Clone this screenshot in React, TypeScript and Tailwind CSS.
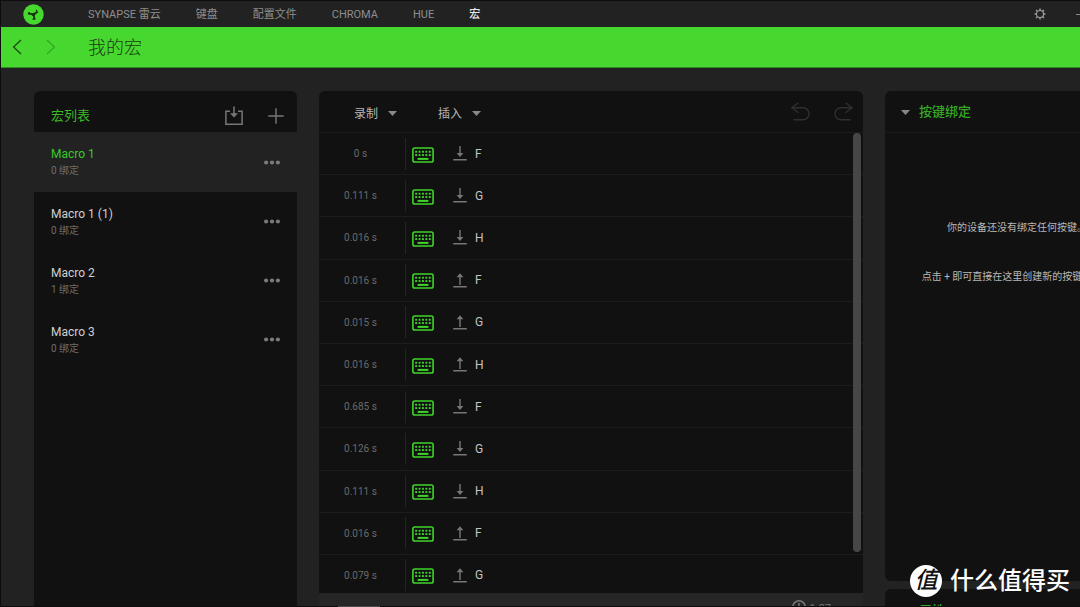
import React from "react";

type Direction = "down" | "up";

const tabs = ["SYNAPSE 雷云", "键盘", "配置文件", "CHROMA", "HUE", "宏"];

const macros = [
  { name: "Macro 1", bindings: 0 },
  { name: "Macro 1 (1)", bindings: 0 },
  { name: "Macro 2", bindings: 1 },
  { name: "Macro 3", bindings: 0 },
];

const events: { time: string; direction: Direction; keyName: string }[] = [
  { time: "0 s", direction: "down", keyName: "F" },
  { time: "0.111 s", direction: "down", keyName: "G" },
  { time: "0.016 s", direction: "down", keyName: "H" },
  { time: "0.016 s", direction: "up", keyName: "F" },
  { time: "0.015 s", direction: "up", keyName: "G" },
  { time: "0.016 s", direction: "up", keyName: "H" },
  { time: "0.685 s", direction: "down", keyName: "F" },
  { time: "0.126 s", direction: "down", keyName: "G" },
  { time: "0.111 s", direction: "down", keyName: "H" },
  { time: "0.016 s", direction: "up", keyName: "F" },
  { time: "0.079 s", direction: "up", keyName: "G" },
];

function Logo() {
  return (
    <svg width="21" height="21" viewBox="0 0 21 21" aria-hidden="true">
      <circle cx="10.5" cy="10.5" r="10.2" fill="#45d92e" />
      <g fill="none" stroke="#14300f" strokeLinecap="round" strokeLinejoin="round">
        <path d="M10.6 10.2 14 8.2M10.2 10.6 5.8 9.4M10.6 11 11.4 14.8" strokeWidth="1.7" />
        <path d="M13.4 6.2 14.2 8.4M5.4 9.8 6.4 8.6M10 15.1 12 14.9" strokeWidth="1.2" />
      </g>
      <circle cx="10.6" cy="10.4" r="1.7" fill="#14300f" />
    </svg>
  );
}

function Chevron({ left = false }: { left?: boolean }) {
  return (
    <svg width="10" height="16" viewBox="0 0 10 16" fill="none" stroke="currentColor" strokeWidth="1.3" aria-hidden="true">
      <path d={left ? "M9 1 1.6 8 9 15" : "M1 1l7.4 7L1 15"} />
    </svg>
  );
}

function Gear() {
  return (
    <svg width="12" height="12" viewBox="0 0 12 12" fill="none" stroke="#a0a0a0" aria-hidden="true">
      <circle cx="6" cy="6" r="3.5" strokeWidth="1.1" />
      <path
        d="M6 .6v1.8M6 9.6v1.8M.6 6h1.8M9.6 6h1.8M2.1 2.1l1.3 1.3M8.6 8.6l1.3 1.3M2.1 9.9l1.3-1.3M8.6 3.4l1.3-1.3"
        strokeWidth="1.4"
      />
    </svg>
  );
}

function ImportIcon() {
  return (
    <svg width="18" height="20" viewBox="0 0 18 20" fill="none" stroke="#777" strokeWidth="1.5" aria-hidden="true">
      <path d="M5 5.2H.9v13h16.2v-13H13" />
      <path d="M9 .5v8" />
      <path d="M5 7.2h8L9 11.6z" fill="#777" stroke="none" />
    </svg>
  );
}

function PlusIcon() {
  return (
    <svg width="16" height="16" viewBox="0 0 16 16" stroke="#777" strokeWidth="1.4" aria-hidden="true">
      <path d="M8 .3v15.4M.3 8h15.4" />
    </svg>
  );
}

function Dots() {
  return (
    <svg width="16" height="5" viewBox="0 0 16 5" fill="#7b7b7b" aria-hidden="true">
      <circle cx="2.1" cy="2.5" r="2.1" />
      <circle cx="8" cy="2.5" r="2.1" />
      <circle cx="13.9" cy="2.5" r="2.1" />
    </svg>
  );
}

function Caret() {
  return (
    <svg width="9" height="5" viewBox="0 0 9 5" fill="#888" aria-hidden="true">
      <path d="M0 0h9L4.5 5z" />
    </svg>
  );
}

function HistoryArrow({ redo = false }: { redo?: boolean }) {
  return (
    <svg width="19" height="19" viewBox="0 0 19 19" fill="none" stroke="#303030" strokeWidth="1.4" aria-hidden="true">
      <path
        d={
          redo
            ? "M18 5.8H7a6 6 0 0 0 0 12h9.5M11.5.8l6.7 5-6.7 5"
            : "M1 5.8h11a6 6 0 0 1 0 12H2.5M7.5.8l-6.7 5 6.7 5"
        }
      />
    </svg>
  );
}

const keyColumns = [3.2, 6.6, 10, 13.4, 16.8];

function KeyboardIcon() {
  return (
    <svg width="22" height="16" viewBox="0 0 22 16" fill="#3ed428" aria-hidden="true">
      <rect x=".9" y="1" width="20.2" height="14" rx="1.8" fill="none" stroke="#3ed428" strokeWidth="1.6" />
      {keyColumns.map((x) => (
        <React.Fragment key={x}>
          <rect x={x} y="3.8" width="1.9" height="1.9" />
          <rect x={x} y="7.1" width="1.9" height="1.9" />
        </React.Fragment>
      ))}
      <rect x="5.6" y="10.9" width="10.8" height="2" />
    </svg>
  );
}

function PressIcon({ direction }: { direction: Direction }) {
  return (
    <svg width="14" height="15" viewBox="0 0 14 15" fill="#777" aria-hidden="true">
      <rect x=".2" y="13" width="13.6" height="1.5" />
      {direction === "down" ? (
        <path d="M6.3 0h1.4v7h2.7L7 11 3.6 7h2.7z" />
      ) : (
        <path d="M6.3 12h1.4V4.2h2.7L7 .2 3.6 4.2h2.7z" />
      )}
    </svg>
  );
}

function TopBar() {
  return (
    <header className="flex h-[26px] shrink-0 items-center bg-[#222222] pl-[22px]">
      <Logo />
      <nav className="mt-px ml-11 flex gap-[35px] text-[11px] leading-4">
        {tabs.map((tab) => (
          <a
            key={tab}
            href="#"
            className={tab === "宏" ? "whitespace-nowrap font-medium text-[#e8e8e8]" : "whitespace-nowrap text-[#8e8e8e]"}
          >
            {tab}
          </a>
        ))}
      </nav>
      <div className="ml-auto flex shrink-0 items-center gap-[30px]">
        <button type="button" aria-label="设置">
          <Gear />
        </button>
        <button type="button" aria-label="最小化" className="h-px w-1 bg-[#888]" />
      </div>
    </header>
  );
}

function TitleBar() {
  return (
    <div className="flex h-[41px] shrink-0 items-center border-b border-[#2f8d22] bg-[#46d82e] pl-[11px] text-[#1d4a14]">
      <button type="button" aria-label="后退">
        <Chevron left />
      </button>
      <button type="button" aria-label="前进" disabled className="ml-6 text-[#35a824]">
        <Chevron />
      </button>
      <h1 className="mt-px ml-8 text-[18px] leading-6 font-light text-[#1c3d16]">我的宏</h1>
    </div>
  );
}

function MacroList() {
  return (
    <aside className="flex w-[263px] shrink-0 flex-col rounded-t-md bg-[#111111]">
      <div className="flex h-[41px] shrink-0 items-center pt-2 pr-[13px] pl-[17px]">
        <h2 className="mr-auto text-[13px] leading-5 text-[#3cb927]">宏列表</h2>
        <button type="button" aria-label="导入">
          <ImportIcon />
        </button>
        <button type="button" aria-label="新建宏" className="ml-[25px]">
          <PlusIcon />
        </button>
      </div>
      <ul>
        {macros.map((macro, index) => (
          <li
            key={macro.name}
            className={
              index === 0
                ? "flex h-[60px] items-center bg-[#222222] px-[17px] text-[#3cc928]"
                : "flex h-[59px] items-center px-[17px] text-[#cfcfcf]"
            }
          >
            <button type="button" className="mr-auto text-left">
              <span className="block text-[12px] leading-[18px]">{macro.name}</span>
              <span className="block text-[10px] leading-4 text-[#6d6d6d]">{macro.bindings} 绑定</span>
            </button>
            <button type="button" aria-label={macro.name + " 选项"}>
              <Dots />
            </button>
          </li>
        ))}
      </ul>
    </aside>
  );
}

function Editor() {
  return (
    <main className="flex min-w-[544px] flex-1 flex-col">
      <div className="flex h-[41px] shrink-0 items-center rounded-t-md bg-[#111111] pt-1 pr-[10px] pl-[35px] text-[12px] text-[#b5b5b5]">
        <button type="button" className="flex items-center gap-[10px]">
          录制
          <Caret />
        </button>
        <button type="button" className="ml-[41px] flex items-center gap-[10px]">
          插入
          <Caret />
        </button>
        <button type="button" aria-label="撤销" disabled className="mb-1 ml-auto">
          <HistoryArrow />
        </button>
        <button type="button" aria-label="重做" disabled className="mb-1 ml-6">
          <HistoryArrow redo />
        </button>
      </div>
      <div className="relative min-h-0 flex-1 overflow-hidden bg-[#111111]">
        <ol className="flex h-[464px] flex-col">
          {events.map((event, index) => (
            <li key={index} className="flex flex-1 items-center border-t border-[#1c1c1c]">
              <span className="w-[83px] text-center text-[10px] text-[#6a6a6a]">{event.time}</span>
              <span className="ml-[3px] h-8 w-px bg-[#242424]" />
              <span className="mt-[2px] ml-[6px]">
                <KeyboardIcon />
              </span>
              <span className="ml-[19px]">
                <PressIcon direction={event.direction} />
              </span>
              <span className="ml-2 text-[12px] text-[#c4c4c4]">{event.keyName}</span>
            </li>
          ))}
        </ol>
        <div className="absolute top-px right-[2px] h-[419px] w-2 rounded-full bg-[#464646]" />
      </div>
      <div className="flex h-[13px] shrink-0 items-start justify-end overflow-hidden bg-[#262626] pr-8 text-[#777]">
        <svg className="mt-[7px] shrink-0" width="14" height="14" viewBox="0 0 14 14" fill="none" stroke="#777" strokeWidth="1.5" aria-hidden="true">
          <circle cx="7" cy="7" r="6.2" />
          <path d="M7 3v4h3" />
        </svg>
        <span className="mt-2 ml-1 text-[11px] leading-4">1.27</span>
      </div>
    </main>
  );
}

function Bindings() {
  return (
    <aside className="flex w-[264px] shrink-0 flex-col gap-2">
      <section className="flex min-h-0 flex-1 flex-col rounded-md bg-[#111111]">
        <div className="flex h-[42px] shrink-0 items-center gap-[9px] border-b border-[#1c1c1c] pt-px pl-4">
          <Caret />
          <h2 className="text-[13px] leading-5 font-medium text-[#35a824]">按键绑定</h2>
        </div>
        <div className="flex flex-col items-center gap-[33px] pt-[87px] text-[10px] leading-4 whitespace-nowrap text-[#b8b8b8]">
          <p>你的设备还没有绑定任何按键。</p>
          <p>点击 + 即可直接在这里创建新的按键绑定。</p>
        </div>
      </section>
      <section className="h-[17px] shrink-0 overflow-hidden rounded-t-md bg-[#111111] pt-3 pl-[34px]">
        <h2 className="text-[13px] leading-5 font-medium text-[#35a824]">属性</h2>
      </section>
    </aside>
  );
}

function Watermark() {
  return (
    <div className="absolute right-[10px] bottom-[10px] flex items-center gap-2 text-white">
      <span className="flex size-8 items-center justify-center rounded-full bg-white text-[23px] leading-8 font-medium text-[#111] italic">
        值
      </span>
      <span className="text-[24px] leading-8 font-medium">什么值得买</span>
    </div>
  );
}

export default function App() {
  return (
    <div className="relative flex h-screen flex-col overflow-hidden border-t border-l border-[#0d0d0d] bg-[#222222] font-[Roboto,'Noto_Sans_CJK_SC',sans-serif] antialiased">
      <TopBar />
      <TitleBar />
      <div className="flex min-h-0 flex-1 gap-[22px] pt-[23px] pl-[33px]">
        <MacroList />
        <Editor />
        <Bindings />
      </div>
      <footer className="h-px shrink-0 bg-[#0d0d0d] pl-[337px]">
        <div className="h-px w-[42px] bg-[#4a4a4a]" />
      </footer>
      <Watermark />
    </div>
  );
}
